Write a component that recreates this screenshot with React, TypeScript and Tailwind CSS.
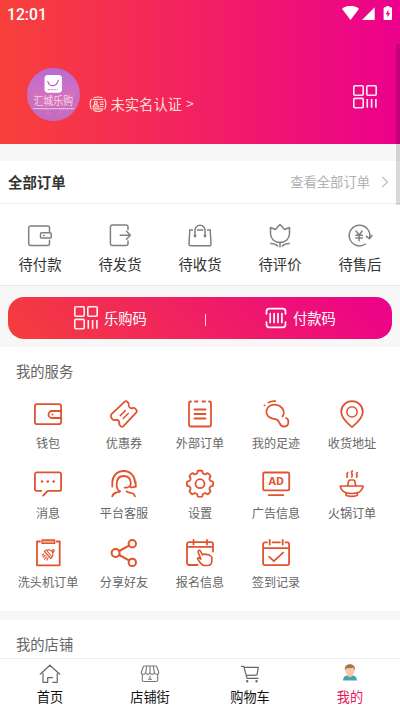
import React from "react";

type IconProps = { children: React.ReactNode; w?: number };

function Red({ children, w = 1.8 }: IconProps) {
  return (
    <svg className="block size-8 text-[#e0532f]" viewBox="0 0 32 32" fill="none" stroke="currentColor" strokeWidth={w} strokeLinecap="round" strokeLinejoin="round">
      {children}
    </svg>
  );
}

function Gray({ children }: IconProps) {
  return (
    <svg className="block size-7 text-[#808080]" viewBox="0 0 28 28" fill="none" stroke="currentColor" strokeWidth={1.5} strokeLinecap="round" strokeLinejoin="round">
      {children}
    </svg>
  );
}

function QrIcon({ className }: { className: string }) {
  return (
    <svg className={className} viewBox="0 0 26 26" fill="none" stroke="#fff" strokeOpacity="0.92" strokeWidth="1.6">
      <rect x="1.8" y="1.8" width="9.4" height="9.4" rx="1" />
      <rect x="14.8" y="1.8" width="9.4" height="9.4" rx="1" />
      <rect x="1.8" y="14.4" width="9.4" height="9.4" rx="1" />
      <path d="M15.300 15v8.800M19.600 15v8.800M23.900 15v8.800" />
    </svg>
  );
}

const orders = [
  {
    label: "待付款",
    icon: (
      <Gray>
        <path d="M23.500 9.500V6a2 2 0 0 0-2-2H4.700a2 2 0 0 0-2 2v15.500a2 2 0 0 0 2 2h16.800a2 2 0 0 0 2-2v-3.300" />
        <rect x="14.500" y="10.800" width="10.700" height="5.300" rx="1.200" />
        <path d="M17.600 13.400h.6" />
      </Gray>
    ),
  },
  {
    label: "待发货",
    icon: (
      <Gray>
        <path d="M22 7.500V5a2 2 0 0 0-2-2H6.400a2 2 0 0 0-2 2v16.500a2 2 0 0 0 2 2H20a2 2 0 0 0 2-2V19" />
        <path d="M14.200 13.300h10M20.500 9.300l3.900 4-3.900 4" />
      </Gray>
    ),
  },
  {
    label: "待收货",
    icon: (
      <Gray>
        <path d="M11.500 8h5.200M6.500 8H3.800L3 22.300a1.500 1.500 0 0 0 1.500 1.500h19a1.500 1.500 0 0 0 1.500-1.500L24.200 8h-2.700" />
        <path d="M9 14V8.200a5 5 0 0 1 10 0V14" />
        <circle cx="9" cy="14" r="0.700" />
        <circle cx="19" cy="14" r="0.700" />
      </Gray>
    ),
  },
  {
    label: "待评价",
    icon: (
      <Gray>
        <path d="M4.500 5.500 9.400 7.500 14 2.600 18.600 7.500l4.900-2v6.300c0 5-4 8.700-9.500 8.700s-9.500-3.700-9.500-8.700z" />
        <path d="M14 20.500v4.300M4.700 21.500c3 0 5.300.8 7 2.500M23.300 21.500c-3 0-5.300.8-7 2.500" />
      </Gray>
    ),
  },
  {
    label: "待售后",
    icon: (
      <Gray>
        <path d="M23.400 16.500A10.300 10.300 0 1 0 19.400 22M23.400 16.700 20.300 14.300M23.400 16.700l2.600-3.200" />
        <path d="m10 9 3.100 4 3.100-4M9.900 13.300h6.400M9.900 16.100h6.400M13.100 13v5.800" />
      </Gray>
    ),
  },
];

// Outline of the eight-toothed settings gear
const gearPath = (() => {
  const parts: string[] = [];
  for (let i = 0; i < 8; i++) {
    const base = (i * Math.PI) / 4 - Math.PI / 2;
    const at = (r: number, a: number) =>
      `${(16 + r * Math.cos(base + a)).toFixed(2)} ${(15.7 + r * Math.sin(base + a)).toFixed(2)}`;
    parts.push(`${i === 0 ? "M" : "L"}${at(11, -0.25)}L${at(13, -0.17)}Q${at(13.6, 0)} ${at(13, 0.17)}L${at(11, 0.25)}Q${at(9.9, 0.39)} ${at(11, 0.535)}`);
  }
  return parts.join("") + "Z";
})();

const services = [
  {
    label: "钱包",
    icon: (
      <Red>
        <rect x="2.900" y="6.200" width="26.200" height="20" rx="2.200" />
        <path d="M29 13H20a3.500 3.500 0 0 0 0 7h9" />
        <path d="M20.500 16.500h.100" />
      </Red>
    ),
  },
  {
    label: "优惠券",
    icon: (
      <Red>
        <path d="M3.500 16.200 16.800 3.600a1.600 1.600 0 0 1 2.300 0l1.300 1.500c.7.800.1 1.800.3 2.800.5 2 2.400 2.700 4 2.200 1-.3 1.700-.4 2.400.4l1.400 1.600c.6.800.5 1.600-.1 2.200L15.200 28.400a1.600 1.600 0 0 1-2.300-.1l-1.300-1.400c-.7-.8-.2-1.700-.4-2.700-.4-1.900-2.200-2.800-4-2.300-1 .3-1.700.5-2.400-.3l-1.400-1.700c-.6-.8-.6-2.900.1-3.700z" />
        <path d="m12.300 17.600 5-5M15.200 20.500l5-5" strokeWidth="1.500" />
      </Red>
    ),
  },
  {
    label: "外部订单",
    icon: (
      <Red>
        <path d="M7 3.500H6.700A1.700 1.700 0 0 0 5 5.200v21.600a1.700 1.700 0 0 0 1.700 1.700h18.600a1.700 1.700 0 0 0 1.700-1.700V5.200a1.700 1.700 0 0 0-1.700-1.700H25M11 3.500h2.500M18.500 3.500H21M10.500 11.500h11M10.500 16h11M10.500 20.500h11" />
      </Red>
    ),
  },
  {
    label: "我的足迹",
    icon: (
      <Red>
        <path d="M22.500 18.500c1.900-2.300 1.500-6-.4-8.400C19.500 6.800 14 5.700 10 7.800c-3.700 2-4.700 6.600-2.400 9.700 2 2.900 5.200 3.300 7.800 3.700 2.700.4 3.300 1.900 4.200 4 .8 2 2.300 3.400 4.500 3.300 2.500-.1 4.300-2 4.300-4.500 0-2.100-1-3.600-2.300-4" />
        <path d="M8.500 4.600c2-1.200 4-1.600 6.700-1.400M4.500 7.300v.1" />
      </Red>
    ),
  },
  {
    label: "收货地址",
    icon: (
      <Red>
        <path d="M16 29c-2.500-2.200-10.800-8.200-10.800-15A10.700 10.700 0 0 1 16 3.100 10.700 10.700 0 0 1 26.800 14c0 6.800-8.300 12.800-10.800 15z" />
        <circle cx="16" cy="13.900" r="5.200" strokeWidth="1.500" />
      </Red>
    ),
  },
  {
    label: "消息",
    icon: (
      <Red>
        <path d="M9.300 22.900H4.900a2 2 0 0 1-2-2V6.400a2 2 0 0 1 2-2h22.200a2 2 0 0 1 2 2v14.500a2 2 0 0 1-2 2H15.800l-4.600 4.600" />
        <path strokeWidth="2.600" d="M10 13.500h.01M15.800 13.500h.01M21.700 13.500h.01" />
      </Red>
    ),
  },
  {
    label: "平台客服",
    icon: (
      <Red>
        <path d="M4.300 18.500v-4C4.300 8 9 3 15.700 3S27 8 27 14.500M4.300 15.500v2.500M27.700 14v4.500" />
        <path d="M11.800 23.500c-2-1.400-3.200-3.900-3.200-7 0-5.400 2.700-8.500 7.200-8.500 4 0 6.700 2.600 7 7 .2 3.300-2.300 4.800-6.200 4.600M27.700 18.500c-1.300.6-3 .9-5 .8" />
        <path d="M4.300 28.400c.3-2.200 1.500-3.300 4.200-3.900 1.600-.4 2.800-.7 3.500-1.300M18.500 23.400c1 1 3 1 5 1.600 2 .5 3.100 1.500 3.400 3.400" />
      </Red>
    ),
  },
  {
    label: "设置",
    icon: (
      <Red>
        <path d={gearPath} />
        <circle cx="16" cy="15.700" r="4.500" />
      </Red>
    ),
  },
  {
    label: "广告信息",
    icon: (
      <Red>
        <rect x="3.200" y="4.500" width="26" height="17.800" rx="1.300" />
        <path d="M8.800 27.200h14.500" />
        <text x="16.200" y="17.100" textAnchor="middle" fontSize="10.800" fontWeight="700" fill="currentColor" stroke="none" fontFamily="'Noto Sans', sans-serif">AD</text>
      </Red>
    ),
  },
  {
    label: "火锅订单",
    icon: (
      <Red w={1.7}>
        <path d="M4.300 18h22.800c-.4 4.500-4.700 7.500-11.400 7.500S4.700 22.500 4.300 18z" />
        <path d="m11.700 17.800.9-4.600a1.500 1.500 0 0 1 1.500-1.200h3.200a1.500 1.500 0 0 1 1.500 1.200l.9 4.600M10 25.500v1.700c1.500 1.500 9.900 1.500 11.400 0v-1.700" />
        <path d="M11.600 4.600c-2 1.400.9 2.600-.6 4.600M16.300 3c-2.300 2 1.300 3-.5 6M21.200 4.600c-2 1.400.9 2.600-.6 4.600" />
      </Red>
    ),
  },
  {
    label: "洗头机订单",
    icon: (
      <Red>
        <path d="M8 4.500H5v23.800h22.700V4.500h-3" />
        <rect x="10" y="3" width="12.700" height="3.400" fill="currentColor" fillOpacity="0.500" strokeWidth="1.300" />
        <g strokeWidth="1.200">
          <path d="m12.500 14.300 6.300 7.300c2.400-2.300 2.700-4.800 1.500-7-2-1.900-5-2-7.800-.3zM19.500 14l1.700-1.400c.7.200 1 .6 1 1.300L20.800 16M13.800 15.800l3.300 4M15.500 14.500l4 5" />
          <path d="m11.800 17-1.600.9M13 18.500l-2 1.500M14.500 19.800l-2 2.400M16 21l-1 2" />
        </g>
      </Red>
    ),
  },
  {
    label: "分享好友",
    icon: (
      <Red w={2}>
        <circle cx="7.600" cy="16" r="4" />
        <circle cx="24.300" cy="6.700" r="3.700" />
        <circle cx="24.300" cy="25.400" r="3.700" />
        <path d="m11.200 14 9.800-5.300M11.200 18l9.800 5.400" />
      </Red>
    ),
  },
  {
    label: "报名信息",
    icon: (
      <Red>
        <path d="M13.500 28H5a2 2 0 0 1-2-2V7.200a2 2 0 0 1 2-2h22a2 2 0 0 1 2 2v7.300M3 9.800h26M9.500 3v4.500M23 3v4.500" />
        <path d="m14.400 20.800 2.500 1.300-2.800-6.900c-.5-1.700 1.500-2.500 2.400-1l1.900 3.600c.6-1 1.700-1 2.400-.2.700-.8 2-.7 2.500.3 1-.6 2.200-.2 2.600.8 1.200 0 1.900.7 2 1.800v3.300c0 2.800-1.700 4.700-4.500 4.700h-2.500c-2 0-3.500-1-4.700-2.800l-2.300-3.300c-.6-1 .2-1.900.5-1.600z" strokeWidth="1.600" />
      </Red>
    ),
  },
  {
    label: "签到记录",
    icon: (
      <Red>
        <path d="M7 5.300H5a1.900 1.900 0 0 0-1.900 1.900v19a1.900 1.900 0 0 0 1.900 1.900h22.200a1.900 1.900 0 0 0 1.900-1.900v-19a1.900 1.900 0 0 0-1.900-1.900H25.500M12.500 5.300h7.500M3.100 11.200h26M9.700 2.900v4.600M22.700 2.900v4.600M9.200 19.800l4.700 4.400 9.200-8.600" />
      </Red>
    ),
  },
];

const tabs = [
  {
    label: "首页",
    icon: (
      <svg className="block size-6" viewBox="0 0 24 24" fill="none" stroke="#666" strokeWidth="1.200" strokeLinecap="round" strokeLinejoin="round">
        <path d="m2.200 12.200 9.700-9 9.900 9M5 11.500v8.800h4.700v-4.600M19.200 11.500v8.800h-4.500M9.700 15.700h4.700" />
      </svg>
    ),
  },
  {
    label: "店铺街",
    icon: (
      <svg className="block size-6" viewBox="0 0 24 24" fill="none" stroke="#777" strokeWidth="1.100" strokeLinecap="round" strokeLinejoin="round">
        <path d="M6.500 4h11a1.500 1.500 0 0 1 1.400 1l1.900 5.500c0 2.200-3.800 2.500-4.400.2-.5 2.200-3.900 2.200-4.400 0-.5 2.200-3.900 2.200-4.400 0-.6 2.300-4.400 2-4.400-.2L5.100 5a1.500 1.500 0 0 1 1.400-1zM8.800 4l-1.200 6.700M12 4v6.700M15.200 4l1.200 6.700M4.300 12.500V18a1.500 1.500 0 0 0 1.500 1.500h12.400a1.500 1.500 0 0 0 1.500-1.500v-5.500M12 14v3M10.500 17.300h3" />
      </svg>
    ),
  },
  {
    label: "购物车",
    icon: (
      <svg className="block size-6" viewBox="0 0 24 24" fill="none" stroke="#666" strokeWidth="1.200" strokeLinecap="round" strokeLinejoin="round">
        <path d="M3.500 4.400h2.300l3.200 12h11M7 5.400h13.300l-1.300 7.600-9.800.3" />
        <circle cx="9.200" cy="19.200" r="0.600" />
        <circle cx="18.500" cy="19.200" r="0.600" />
      </svg>
    ),
  },
  {
    label: "我的",
    icon: (
      <svg className="block size-6" viewBox="0 0 24 24">
        <path d="M5 18.600c.2-3.300 1.700-5 4.800-5h4.400c3.100 0 4.600 1.700 4.800 5z" fill="#43a5ad" />
        <path d="M10 12h4v2.300c-.8 1.200-3.200 1.200-4 0z" fill="#eeba99" />
        <ellipse cx="12" cy="8.600" rx="4.700" ry="5.300" fill="#f5c9ab" />
        <path d="M6.900 8c-.3-3.500 1.500-5.800 5-5.800s5.500 2.200 5.100 5.800c-1-.5-1.300-1.500-1.800-2.500-2.300 1-4.700.9-6.600.4C8 6.800 7.700 7.600 6.900 8z" fill="#ad7040" />
      </svg>
    ),
  },
];

export default function App() {
  return (
    <div className="relative flex h-[711px] w-[400px] flex-col overflow-hidden bg-white font-['Noto_Sans_CJK_SC',sans-serif] text-[#333]">
      <header className="h-[144px] shrink-0 bg-[linear-gradient(90deg,#f8413a,#ec008c)] text-white">
        <div className="flex h-7 items-center justify-between px-[7px]">
          <span className="pt-px font-['Roboto',sans-serif] text-[15.700px] leading-[27px] font-medium">12:01</span>
          <svg className="block h-4 w-[52px]" viewBox="0 0 52 16" fill="#fff">
            <path d="M1 2.800c4.500-4 12.500-4 17 0L9.500 14z" />
            <path d="M33.700 1.200V14H21z" />
            <path fillRule="evenodd" d="M43.500 1.300h1.800V0h3v1.300h1.800q.9 0 .9.900v11q0 .8-.9.800h-6.600q-.9 0-.9-.8v-11q0-.9.900-.9zM47.400 3.700l-2.700 4.500h1.700v3.400l2.700-4.600h-1.700z" />
          </svg>
        </div>
        <div className="flex items-start pt-[39.500px] pr-[22px] pl-[26.500px]">
          <div className="size-[53.500px] overflow-hidden rounded-full bg-[linear-gradient(180deg,#b66bd6,#d873ba_60%,#c870bf)]">
            <svg className="block size-full" viewBox="0 0 54 54">
              <path d="M0 22 27 54 7 48 0 30zM54 22 27 54l20-6 7-18zM20 39h14l-7 15z" fill="#9b5fc8" opacity="0.200" />
              <rect x="17.700" y="7" width="17.600" height="18" rx="3.500" fill="#fff" />
              <path d="M21 13.500c1.700 6 8.500 6 10.600-1" fill="none" stroke="#b464bd" strokeWidth="1.200" strokeLinecap="round" />
              <path d="M31.400 10.500v.1M21 21.800h10" stroke="#c679bd" strokeWidth="1" strokeDasharray="2 1" />
              <text x="6.500" y="37.200" fontSize="11" fontWeight="300" fill="#fff" textLength="40" lengthAdjust="spacingAndGlyphs">汇城乐购</text>
              <path d="M6.500 41h41" stroke="#fff" strokeWidth="1.100" strokeDasharray="1.300 .7" opacity="0.800" />
            </svg>
          </div>
          <div className="mt-[25.500px] ml-[9px] flex items-center text-[#ffdccf]">
            <svg className="block size-[18px]" viewBox="0 0 18 18" fill="none" stroke="currentColor" strokeWidth="1.200" strokeLinecap="round">
              <path d="M5 2.800C7 1.700 11 1.700 13 2.800M5 15.500c2 1.200 6 1.200 8 0M2.300 4.500C.8 6 .8 12 2.300 13.800M15.700 4.500c1.500 1.500 1.500 7.500 0 9.300M4 4.500h10M4 13.800h10M11.200 7h3M11.200 9.300h3M11.200 11.500h3" />
              <circle cx="6.800" cy="7.600" r="1.500" />
              <path d="M4 12c.3-3.200 5.300-3.200 5.600 0z" />
            </svg>
            <span className="ml-[3.500px] text-[14.300px] leading-[21px] whitespace-pre">未实名认证</span>
            <span className="ml-[4px] text-[14px] leading-[21px]">&gt;</span>
          </div>
          <QrIcon className="mt-[16px] ml-auto block size-[26px]" />
        </div>
      </header>

      <div className="h-[17px] shrink-0 bg-[#f7f7f7]" />

      <section className="flex h-[125px] shrink-0 flex-col border-b border-[#ebebeb]">
        <div className="flex h-[43px] items-center border-b border-[#eee] pr-[11px] pb-px pl-2">
          <h2 className="text-[14.400px] leading-5 font-bold">全部订单</h2>
          <span className="ml-auto text-[13.300px] leading-5 text-[#b0b0b0]">查看全部订单</span>
          <svg className="ml-[11px] block h-3 w-2" viewBox="0 0 8 12" fill="none" stroke="#bbb" strokeWidth="1.100">
            <path d="m1.300 1 5.200 5-5.200 5" />
          </svg>
        </div>
        <div className="grid grid-cols-5 pt-[18px]">
          {orders.map((o) => (
            <div key={o.label} className="flex flex-col items-center">
              {o.icon}
              <span className="mt-[4px] text-[14.300px] leading-5">{o.label}</span>
            </div>
          ))}
        </div>
      </section>

      <div className="h-[61px] shrink-0 bg-[#f7f7f7] px-2 pt-[11px]">
        <div className="flex h-[42px] items-center rounded-[16px] bg-[linear-gradient(45deg,#f43f3b,#ec008c)] text-[14.300px] leading-5 text-white">
          <div className="flex flex-1 items-center pl-[65px]">
            <QrIcon className="block size-[26px]" />
            <span className="ml-[5px]">乐购码</span>
          </div>
          <span className="mt-1 h-3 w-px bg-white/80" />
          <div className="flex w-[186px] items-center pl-[50px]">
            <svg className="ml-[8px] block h-[24px] w-[24px]" viewBox="0 0 24 24" fill="none" stroke="#fff" strokeWidth="1.700" strokeLinecap="round">
              <path d="M2.500 8V5.500a2.800 2.800 0 0 1 2.800-2.800h13.400a2.800 2.800 0 0 1 2.800 2.800V8M2.500 16v2.500a2.800 2.800 0 0 0 2.800 2.800h13.400a2.800 2.800 0 0 0 2.800-2.800V16M6.200 7.500v9M10.100 7.500v9M14 7.500v9M17.900 7.500v9" />
            </svg>
            <span className="ml-[5px]">付款码</span>
          </div>
        </div>
      </div>

      <section className="h-[264px] shrink-0 px-[10px]">
        <h2 className="pt-[13px] pl-[6px] text-[14.300px] leading-[22px] text-[#666]">我的服务</h2>
        <div className="grid auto-rows-[69.700px] grid-cols-5 pt-4">
          {services.map((s) => (
            <div key={s.label} className="flex flex-col items-center">
              {s.icon}
              <span className="mt-[4px] text-[12.100px] leading-[18px] whitespace-nowrap text-[#666]">{s.label}</span>
            </div>
          ))}
        </div>
      </section>

      <div className="h-[9px] shrink-0 bg-[#f7f7f7]" />
      <h2 className="h-[38px] shrink-0 pt-[13px] pl-4 text-[14.300px] leading-[22px] text-[#666]">我的店铺</h2>

      <nav className="grid h-[53px] shrink-0 grid-cols-4 border-t border-[#f0f0f0] text-[#111]">
        {tabs.map((t) => (
          <div key={t.label} className="flex flex-col items-center pt-[3px] last:text-[#ec1459]">
            {t.icon}
            <span className="mt-px text-[13.200px] leading-5">{t.label}</span>
          </div>
        ))}
      </nav>

      <div className="absolute top-[44px] right-0 h-[161px] w-1 bg-black/15" />
    </div>
  );
}
